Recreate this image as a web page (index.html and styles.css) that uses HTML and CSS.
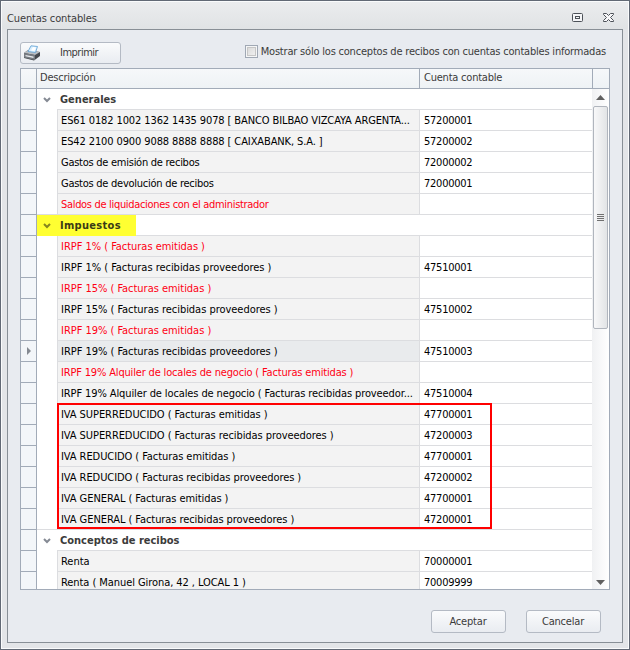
FILE: index.html
```html
<!DOCTYPE html>
<html lang="es">
<head>
<meta charset="utf-8">
<title>Cuentas contables</title>
<link rel="stylesheet" href="styles.css">
</head>
<body>
<div class="window">
  <header class="titlebar">
    <span class="caption">Cuentas contables</span>
    <svg class="win-max" width="11" height="9" viewBox="0 0 11 9"><rect x=".5" y=".5" width="10" height="8" rx="1" fill="#f4f5f7" stroke="#4c5158"/><rect x="3.5" y="3.5" width="4" height="2" fill="none" stroke="#4c5158"/></svg>
    <svg class="win-close" width="11" height="9" viewBox="0 0 11 9"><path d="M.5.5H3.5L5.5 2.5L7.5.5H10.5V1.5L7.5 4.5L10.5 7.5V8.5H7.5L5.5 6.5L3.5 8.5H.5V7.5L3.5 4.5L.5 1.5Z" fill="#f8f8fa" stroke="#4c5158"/></svg>
  </header>
  <main class="panel">
    <div class="toolbar">
      <button class="btn print">
        <svg width="18" height="16" viewBox="0 0 18 16"><path d="M1 8L5 5L17 7V11L11 15.500L1 13Z" fill="#44484d"/><path d="M1 8L5 5L17 7L12 10Z" fill="#b9bec3"/><path d="M1 8L12 10V15L1 12.500Z" fill="#777c82"/><path d="M2.500 10L10.500 11.500V13L2.500 11.200Z" fill="#e6e9ec"/><path d="M8 .8L14.500 1.500L12.500 7.500L5 6.500Z" fill="#d8efff" stroke="#5d9ed0" stroke-width=".8"/><path d="M10 2L13 2.400L11.500 6L8 5.500Z" fill="#fff"/></svg>
        <span>Imprimir</span>
      </button>
      <label class="check"><span class="box"></span><span class="check-text">Mostrar sólo los conceptos de recibos con cuentas contables informadas</span></label>
    </div>
    <section class="grid">
      <div class="head"><span class="h-ind"></span><span class="h-desc">Descripción</span><span class="h-acc">Cuenta contable</span><span class="h-end"></span></div>
      <div class="body">
        <div class="rows">
          <div class="row group"><i class="ind"></i><svg class="chev" width="8" height="6" viewBox="0 0 8 6"><path d="M1 1L4 4L7 1" /></svg><b>Generales</b></div>
          <div class="row"><i class="ind"></i><span class="desc snug">ES61 0182 1002 1362 1435 9078 [ BANCO BILBAO VIZCAYA ARGENTA...</span><span class="acc">57200001</span></div>
          <div class="row"><i class="ind"></i><span class="desc snug">ES42 2100 0900 9088 8888 8888 [ CAIXABANK, S.A. ]</span><span class="acc">57200002</span></div>
          <div class="row"><i class="ind"></i><span class="desc tight">Gastos de emisión de recibos</span><span class="acc">72000002</span></div>
          <div class="row"><i class="ind"></i><span class="desc tight">Gastos de devolución de recibos</span><span class="acc">72000001</span></div>
          <div class="row last missing"><i class="ind"></i><span class="desc tighter">Saldos de liquidaciones con el administrador</span><span class="acc"></span></div>
          <div class="row group marked"><i class="ind"></i><svg class="chev" width="8" height="6" viewBox="0 0 8 6"><path d="M1 1L4 4L7 1" /></svg><b class="wide">Impuestos</b></div>
          <div class="row missing"><i class="ind"></i><span class="desc loose">IRPF 1% ( Facturas emitidas )</span><span class="acc"></span></div>
          <div class="row"><i class="ind"></i><span class="desc loose">IRPF 1% ( Facturas recibidas proveedores )</span><span class="acc">47510001</span></div>
          <div class="row missing"><i class="ind"></i><span class="desc loose">IRPF 15% ( Facturas emitidas )</span><span class="acc"></span></div>
          <div class="row"><i class="ind"></i><span class="desc loose">IRPF 15% ( Facturas recibidas proveedores )</span><span class="acc">47510002</span></div>
          <div class="row missing"><i class="ind"></i><span class="desc loose">IRPF 19% ( Facturas emitidas )</span><span class="acc"></span></div>
          <div class="row current"><i class="ind"><svg width="4" height="8" viewBox="0 0 4 8"><path d="M0 0L4 4L0 8Z" fill="#858a92"/></svg></i><span class="desc loose">IRPF 19% ( Facturas recibidas proveedores )</span><span class="acc">47510003</span></div>
          <div class="row missing"><i class="ind"></i><span class="desc close">IRPF 19% Alquiler de locales de negocio ( Facturas emitidas )</span><span class="acc"></span></div>
          <div class="row"><i class="ind"></i><span class="desc snug">IRPF 19% Alquiler de locales de negocio ( Facturas recibidas proveedor...</span><span class="acc">47510004</span></div>
          <div class="row"><i class="ind"></i><span class="desc">IVA SUPERREDUCIDO ( Facturas emitidas )</span><span class="acc">47700001</span></div>
          <div class="row"><i class="ind"></i><span class="desc">IVA SUPERREDUCIDO ( Facturas recibidas proveedores )</span><span class="acc">47200003</span></div>
          <div class="row"><i class="ind"></i><span class="desc">IVA REDUCIDO ( Facturas emitidas )</span><span class="acc">47700001</span></div>
          <div class="row"><i class="ind"></i><span class="desc">IVA REDUCIDO ( Facturas recibidas proveedores )</span><span class="acc">47200002</span></div>
          <div class="row"><i class="ind"></i><span class="desc">IVA GENERAL ( Facturas emitidas )</span><span class="acc">47700001</span></div>
          <div class="row last"><i class="ind"></i><span class="desc">IVA GENERAL ( Facturas recibidas proveedores )</span><span class="acc">47200001</span></div>
          <div class="row group"><i class="ind"></i><svg class="chev" width="8" height="6" viewBox="0 0 8 6"><path d="M1 1L4 4L7 1" /></svg><b>Conceptos de recibos</b></div>
          <div class="row"><i class="ind"></i><span class="desc loose">Renta</span><span class="acc">70000001</span></div>
          <div class="row"><i class="ind"></i><span class="desc">Renta ( Manuel Girona, 42 , LOCAL 1 )</span><span class="acc">70009999</span></div>
          <div class="outline"></div>
        </div>
        <div class="scroll">
          <svg class="arrow" width="9" height="5" viewBox="0 0 9 5"><path d="M0 5L4.500 0L9 5Z" fill="#606060"/></svg>
          <div class="thumb"><i></i><i></i><i></i><i></i></div>
          <svg class="arrow down" width="9" height="5" viewBox="0 0 9 5"><path d="M0 0L4.500 5L9 0Z" fill="#606060"/></svg>
        </div>
      </div>
    </section>
    <footer class="actions"><button class="btn"><span>Aceptar</span></button><button class="btn"><span>Cancelar</span></button></footer>
  </main>
</div>
</body>
</html>
```
FILE: styles.css
```css
* { box-sizing: border-box; }
body { margin: 0; font: 11px/20px "DejaVu Sans Condensed", "DejaVu Sans", sans-serif; font-stretch: condensed; color: #000; }
.window { width: 630px; height: 650px; border: 1px solid #626975; background: #e3e5e8; box-shadow: inset 0 0 0 1px #fafbfc; padding: 0 6px 6px; display: flex; flex-direction: column; }
.titlebar { height: 28px; margin: 0 -5px; padding: 5px 9px 0 5px; display: flex; color: #3b3b3b; background: linear-gradient(#ebecee, #e0e3e5); border-top: 1px solid #fafbfc; }
.caption { flex: 1; margin-top: 2px; line-height: 20px; letter-spacing: -.12px; }
.win-max { margin: 6px 20px 0 0; }
.win-close { margin: 6px 5px 0 0; }
.panel { flex: 1; border: 1px solid #888f96; background: #e8ebf0; padding: 12px; min-height: 0; }
.toolbar { display: flex; height: 26px; justify-content: space-between; color: #3b3b3b; }
.btn { font: inherit; color: #3b3b3b; height: 23px; width: 75px; padding: 0 1px 0 0; border: 1px solid #b4bac4; border-radius: 3px; background: linear-gradient(#fafbfc, #e9ecf1); letter-spacing: -.2px; }
.print { width: 101px; height: 22px; display: flex; align-items: center; padding-left: 2px; letter-spacing: -.5px; }
.print span { margin-left: 19px; }
.check { display: flex; padding: 3px 4px 0 0; }
.box { width: 13px; height: 13px; margin-right: 3px; border: 1px solid #a0a8b4; background: linear-gradient(135deg, #d5d5d5, #f5f5f5); box-shadow: inset 0 0 0 1px #f5f6f7, inset 0 0 0 2px #c6c6c6; }
.check-text { line-height: 14px; white-space: nowrap; letter-spacing: -.2px; }
.grid { width: 590px; height: 522px; border: 1px solid #a2abb8; background: #fff; display: flex; flex-direction: column; }
.head { display: flex; height: 20px; flex: none; background: linear-gradient(#f6f8fa, #eef2f5); border-bottom: 1px solid #a2abb8; color: #3b3b3b; line-height: 18px; letter-spacing: -.22px; }
.h-ind { width: 16px; border-right: 1px solid #a2abb8; }
.h-desc { width: 383px; padding-left: 3px; border-right: 1px solid #a2abb8; }
.h-acc { width: 173px; padding-left: 4px; border-right: 1px solid #a2abb8; }
.body { flex: 1; display: flex; min-height: 0; overflow: hidden; }
.rows { width: 571px; position: relative; }
.row { display: flex; height: 21px; white-space: pre; line-height: 21px; }
.ind { flex: none; width: 16px; background: #f3f6f9; border-right: 1px solid #a2abb8; border-bottom: 1px solid #a2abb8; display: flex; align-items: center; justify-content: center; }
.desc { margin-left: 20px; width: 363px; padding-left: 3px; background: #f3f3f3; border: solid #dcdde0; border-width: 0 1px 1px; flex: none; letter-spacing: -.07px; }
.loose { letter-spacing: -.03px; }
.snug { letter-spacing: -.11px; }
.close { letter-spacing: -.17px; }
.tight { letter-spacing: -.26px; }
.tighter { letter-spacing: -.32px; }
.wide { letter-spacing: .3px; }
.acc { flex: 1; padding-left: 4px; border-bottom: 1px solid #dcdde0; letter-spacing: -.25px; }
.missing .desc { color: #ff0014; }
.current .desc { background: #e9ebed; }
.group { color: #3b3b3b; background: linear-gradient(#dcdde0, #dcdde0) 36px 20px / 535px 1px no-repeat; }
.last { background: linear-gradient(#dcdde0, #dcdde0) 16px 20px / 555px 1px no-repeat; }
.chev { margin: 8px 8px 0 6px; fill: none; stroke: #858a94; stroke-width: 2; }
.group b { margin-left: 1px; }
.marked { background: linear-gradient(#ffff32, #ffff32) 16px 0 / 99px 21px no-repeat, linear-gradient(#dcdde0, #dcdde0) 36px 20px / 535px 1px no-repeat; }
.marked .chev { stroke: #85851e; }
.marked b { color: #3b3b16; }
.outline { position: absolute; left: 36px; top: 314px; width: 435px; height: 126px; border: 2px solid #ff0000; }
.scroll { flex: 1; display: flex; flex-direction: column; align-items: center; padding: 6px 1px 4px; background: linear-gradient(90deg, #f0f1f3, #fff); }
.arrow { flex: none; }
.down { margin-top: auto; }
.thumb { width: 15px; height: 223px; margin-top: 6px; border: 1px solid #b0b5bd; border-radius: 2px; background: linear-gradient(90deg, #f8f8f9, #e2e4e6); display: flex; flex-direction: column; align-items: center; justify-content: center; gap: 1px; }
.thumb i { width: 7px; height: 1px; background: #707070; }
.actions { display: flex; justify-content: flex-end; gap: 20px; padding: 20px 9px 0 0; }
```
